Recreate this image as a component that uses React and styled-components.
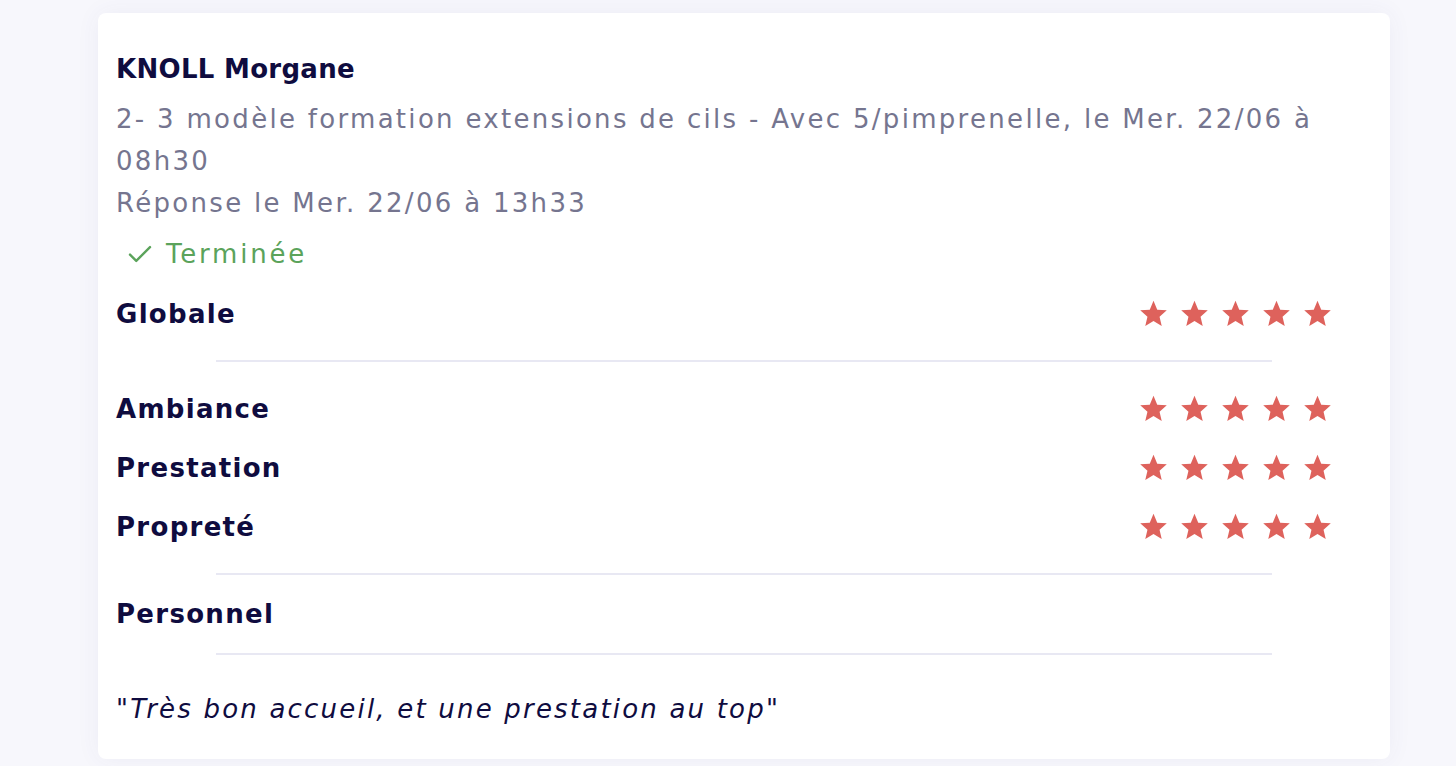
import styled, { createGlobalStyle } from "styled-components";

const GlobalStyle = createGlobalStyle`
 body {
  margin: 0;
  background: #f7f7fc;
  font-family: "DejaVu Sans", "Noto Sans", sans-serif;
 }
`

const Page = styled.div`
 padding: 13px 66px 9px 98px;
`

const Card = styled.div`
 background: #ffffff;
 border-radius: 8px;
 box-shadow: 0 0 24px rgba(60, 60, 140, 0.06);
 padding: 35px 18px 29px 18px;
`

const Name = styled.div`
 font-size: 26px;
 font-weight: 700;
 line-height: 42px;
 letter-spacing: 0.3px;
 color: #0f0c3f;
 margin-bottom: 8px;
`

const Sub = styled.div`
 font-size: 26px;
 line-height: 42px;
 letter-spacing: 2.3px;
 color: #75758f;
`

const Status = styled.div`
 display: flex;
 align-items: center;
 gap: 11px;
 margin-top: 9px;
 padding-left: 9px;
 height: 42px;
 font-size: 26px;
 letter-spacing: 2.8px;
 color: #5ba35b;
`

const Row = styled.div`
 display: flex;
 align-items: center;
 justify-content: space-between;
 height: ${p => (p.short ? "44px" : "59px")};
 padding-right: 40px;
 margin-top: ${p => p.top || 0}px;
`

const Label = styled.div`
 font-size: 26px;
 font-weight: 700;
 letter-spacing: 1.3px;
 color: #0f0c3f;
`

const Stars = styled.div`
 display: flex;
 gap: 12px;
`

const Divider = styled.div`
 height: 2px;
 background: #e8e8f3;
 margin: 17px 100px 17px 100px;
`

const Quote = styled.div`
 margin-top: 33px;
 font-size: 26px;
 font-style: italic;
 line-height: 42px;
 letter-spacing: 2.2px;
 color: #0f0c3f;
`

const Star = () => (
 <svg width="29" height="29" viewBox="0 0 24 24">
  <path fill="#de625c" d="M12 1.5l3.1 7.3 7.9.6-6 5.2 1.8 7.7L12 18.2l-6.8 4.1 1.8-7.7-6-5.2 7.9-.6z" />
 </svg>
)

const Check = () => (
 <svg width="30" height="30" viewBox="0 0 24 24" fill="none" stroke="#5ba35b" strokeWidth="1.9" strokeLinecap="round" strokeLinejoin="round">
  <path d="M20 6.5 9 17.5l-5-5" />
 </svg>
)

const FiveStars = () => (
 <Stars>
  {[0, 1, 2, 3, 4].map(i => <Star key={i} />)}
 </Stars>
)

const App = () => {
 return (
  <Page>
   <GlobalStyle />
   <Card>
    <Name>KNOLL Morgane</Name>
    <Sub>2- 3 modèle formation extensions de cils - Avec 5/pimprenelle, le Mer. 22/06 à 08h30</Sub>
    <Sub>Réponse le Mer. 22/06 à 13h33</Sub>
    <Status><Check />Terminée</Status>
    <Row top={9}>
     <Label>Globale</Label>
     <FiveStars />
    </Row>
    <Divider />
    <Row>
     <Label>Ambiance</Label>
     <FiveStars />
    </Row>
    <Row>
     <Label>Prestation</Label>
     <FiveStars />
    </Row>
    <Row>
     <Label>Propreté</Label>
     <FiveStars />
    </Row>
    <Divider />
    <Row short>
     <Label>Personnel</Label>
    </Row>
    <Divider />
    <Quote>"Très bon accueil, et une prestation au top"</Quote>
   </Card>
  </Page>
 )
}

export default App
